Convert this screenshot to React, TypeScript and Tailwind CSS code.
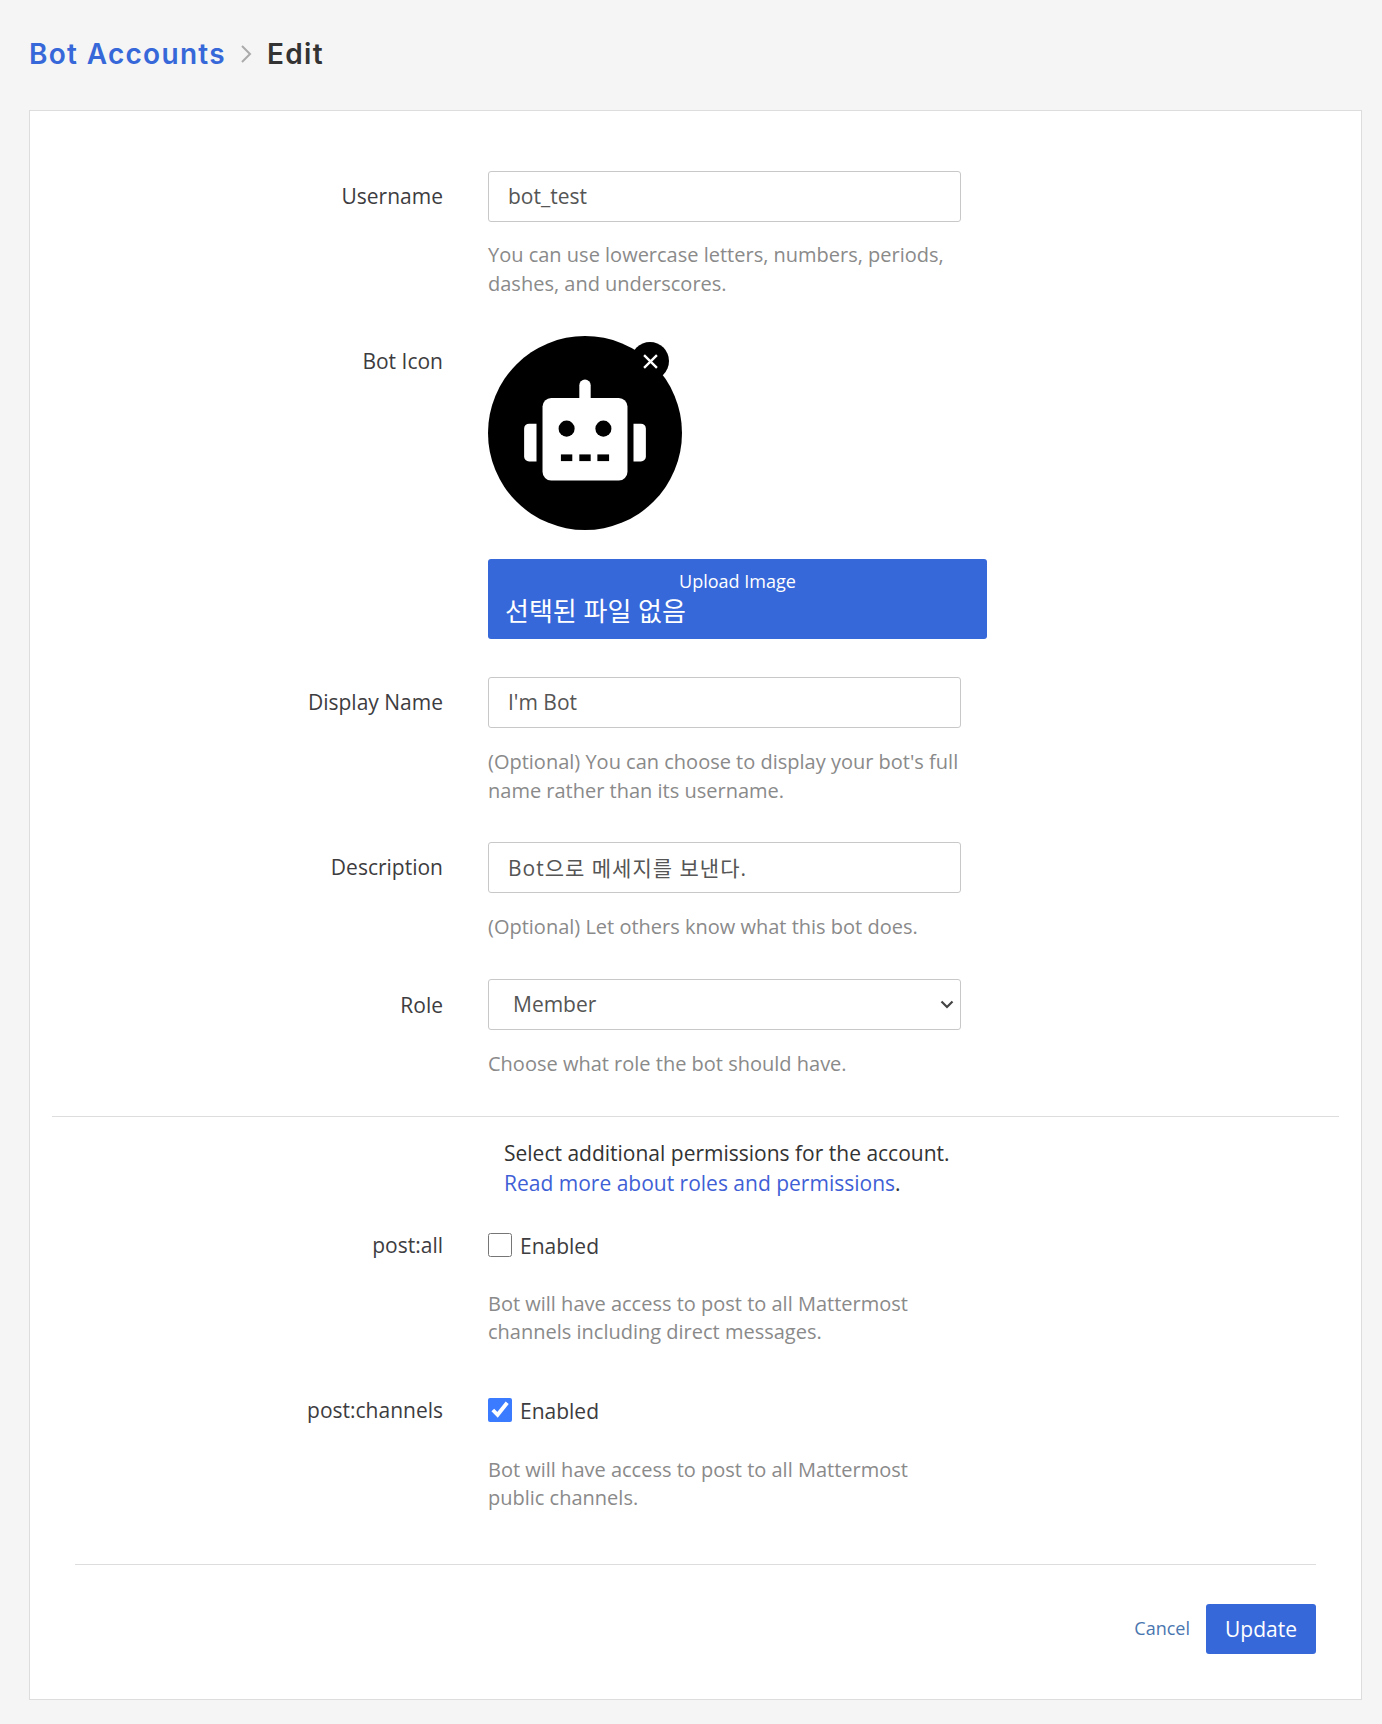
import React from "react";

const body = { fontFamily: '"Open Sans", "Noto Sans CJK KR", sans-serif' };

function Row({ label, children, className = "mb-[38px]", labelClass = "pt-[11px]" }: { label: string; children: React.ReactNode; className?: string; labelClass?: string }) {
  return (
    <div className={`flex items-start ${className}`}>
      <label className={`w-[413px] shrink-0 text-right text-[21px] leading-[29px] text-[#3d3c40] ${labelClass}`}>{label}</label>
      <div className="ml-[45px] min-w-0 grow">{children}</div>
    </div>
  );
}

function TextField({ value, className = "" }: { value: string; className?: string }) {
  return (
    <input
      readOnly
      value={value}
      className={`block h-[51px] w-[473px] rounded-[3px] border border-[#c8c8c8] bg-white px-[19px] pb-[2px] text-[21px] text-[#555555] outline-none ${className}`}
    />
  );
}

function Help({ children, className = "mt-[19px]" }: { children: React.ReactNode; className?: string }) {
  return <p className={`w-[473px] text-[20px] leading-[28.6px] text-[#8a8a8a] ${className}`}>{children}</p>;
}

function Perm({ label, checked, className, helpClass, children }: { label: string; checked: boolean; className: string; helpClass: string; children: React.ReactNode }) {
  return (
    <Row label={label} labelClass="pt-0" className={className}>
      <div className="flex h-[29px] items-center">
        <input type="checkbox" readOnly checked={checked} className="m-0 h-6 w-6 accent-[#3b7bff]" />
        <span className="ml-2 pt-[2px] text-[21px] leading-[29px] text-[#3d3c40]">Enabled</span>
      </div>
      <Help className={helpClass}>{children}</Help>
    </Row>
  );
}

function RobotIcon() {
  return (
    <svg viewBox="85 48 580 580" className="block h-[194px] w-[194px]">
      <circle cx="375" cy="338" r="290" fill="#000" />
      <rect x="358" y="178" width="34" height="80" rx="17" fill="#fff" />
      <rect x="248" y="233" width="254" height="247" rx="26" fill="#fff" />
      <path d="M230 310h-22a15 15 0 0 0-15 15v83a15 15 0 0 0 15 15h22z" fill="#fff" />
      <path d="M520 310h22a15 15 0 0 1 15 15v83a15 15 0 0 1-15 15h-22z" fill="#fff" />
      <circle cx="320" cy="325" r="24" fill="#000" />
      <circle cx="430" cy="325" r="24" fill="#000" />
      <rect x="303" y="402" width="34" height="20" fill="#000" />
      <rect x="358" y="402" width="34" height="20" fill="#000" />
      <rect x="412" y="402" width="35" height="20" fill="#000" />
    </svg>
  );
}

export default function App() {
  return (
    <div className="h-[1724px] bg-[#f5f5f5] pl-[29px] pr-[20px]" style={body}>
      <header className="flex h-[110px] items-center pb-[3px]">
        <h1 className="flex items-center text-[28px] font-semibold leading-[36px] tracking-[1.3px] text-[#333333]" style={{ fontFamily: 'Inter, sans-serif' }}>
          <span className="text-[#3768d9]">Bot Accounts</span>
          <svg viewBox="0 0 12 20" className="ml-[14px] mr-[15px] h-[20px] w-[12px]" fill="none" stroke="#aaaaaa" strokeWidth="2">
            <path d="M2 2l8 8-8 8" />
          </svg>
          <span>Edit</span>
        </h1>
      </header>

      <main className="h-[1590px] border border-[#dddddd] bg-white pt-[60px]">
        <Row label="Username">
          <TextField value="bot_test" />
          <Help>You can use lowercase letters, numbers, periods, dashes, and underscores.</Help>
        </Row>

        <Row label="Bot Icon">
          <div className="relative h-[193px] w-[194px]">
            <RobotIcon />
            <button className="absolute left-[143px] top-[6px] flex h-[38px] w-[38px] items-center justify-center rounded-full bg-black">
              <svg viewBox="0 0 14 14" className="h-[15px] w-[15px]" stroke="#fff" strokeWidth="2.2" fill="none">
                <path d="M1 1l12 12M13 1L1 13" />
              </svg>
            </button>
          </div>
          <div className="mt-[30px] h-[80px] w-[499px] rounded-[3px] bg-[#3668da] text-white">
            <div className="pt-[8px] text-center text-[18px] leading-[28px]">Upload Image</div>
            <div className="pl-[17px] text-[26px] leading-[33px]">선택된 파일 없음</div>
          </div>
        </Row>

        <Row label="Display Name" className="mb-[37px]">
          <TextField value="I'm Bot" />
          <Help className="mt-[20px]">(Optional) You can choose to display your bot's full name rather than its username.</Help>
        </Row>

        <Row label="Description" className="mb-[37px]">
          <TextField value="Bot으로 메세지를 보낸다." className="tracking-[1px]" />
          <Help className="mt-[20px]">(Optional) Let others know what this bot does.</Help>
        </Row>

        <Row label="Role" className="mb-[37px]" labelClass="pt-[12px]">
          <div className="relative w-[473px]">
            <select className="block h-[51px] w-full appearance-none rounded-[3px] border border-[#c8c8c8] bg-white pl-[24px] pr-[8px] pt-[1px] text-[21px] text-[#555555] outline-none">
              <option>Member</option>
            </select>
            <svg viewBox="0 0 14 9" className="pointer-events-none absolute right-[7px] top-[21px] h-[9px] w-[14px]" fill="none" stroke="#444444" strokeWidth="2.2">
              <path d="M1.5 1.5L7 7l5.5-5.5" />
            </svg>
          </div>
          <Help className="mt-[20px]">Choose what role the bot should have.</Help>
        </Row>

        <div className="mx-[22px] h-px bg-[#dddddd]" />

        <div className="mb-[33px] ml-[474px] mt-[21px] text-[21px] leading-[30px] text-[#333333]">
          <div>Select additional permissions for the account.</div>
          <div>
            <span className="text-[#3f5fd6]">Read more about roles and permissions</span>.
          </div>
        </div>

        <Perm label="post:all" checked={false} className="mb-[49px]" helpClass="mt-[30px]">
          Bot will have access to post to all Mattermost channels including direct messages.
        </Perm>
        <Perm label="post:channels" checked={true} className="mb-[51px]" helpClass="mt-[31px]">
          Bot will have access to post to all Mattermost public channels.
        </Perm>

        <div className="mx-[45px] h-px bg-[#dddddd]" />

        <div className="mr-[45px] mt-[39px] flex items-center justify-end">
          <a className="mr-[16px] text-[18px] text-[#4a76b0]">Cancel</a>
          <button className="h-[50px] w-[110px] rounded-[3px] bg-[#3668da] pt-[1px] text-[21px] text-white">Update</button>
        </div>
      </main>
    </div>
  );
}
